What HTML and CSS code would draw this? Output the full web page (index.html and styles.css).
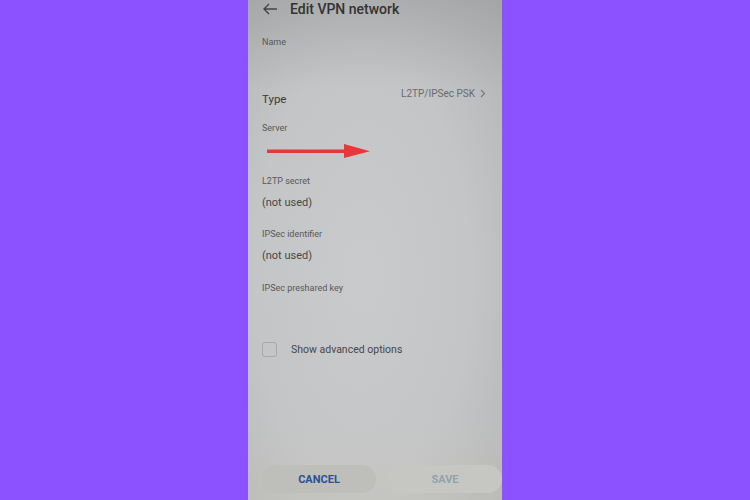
FILE: index.html
```html
<!DOCTYPE html>
<html lang="en">
<head>
    <meta charset="UTF-8">
    <title>Edit VPN network</title>
    <link rel="stylesheet" href="styles.css">
</head>
<body>

<div class="phone">
    <div class="header">
        <svg class="back" width="16" height="12" viewBox="0 0 16 12">
            <path d="M15 6H2M7 1L2 6l5 5" fill="none" stroke="#444" stroke-width="1.4"/>
        </svg>
        <span class="title">Edit VPN network</span>
    </div>

    <div class="label name-label">Name</div>

    <div class="type-row">
        <span class="type">Type</span>
        <span class="type-value">L2TP/IPSec PSK
            <svg width="6" height="9" viewBox="0 0 6 9"><path d="M1 1l3.5 3.5L1 8" fill="none" stroke="#777" stroke-width="1.1"/></svg>
        </span>
    </div>

    <div class="label server-label">Server</div>
    <svg class="arrow" width="110" height="16" viewBox="0 0 110 16">
        <path d="M5 6.5h80v3.5H5z" fill="#e8373a"/>
        <path d="M82 1l26 7.2-26 6.8z" fill="#e8373a"/>
    </svg>

    <div class="label secret-label">L2TP secret</div>
    <div class="value">(not used)</div>

    <div class="label ident-label">IPSec identifier</div>
    <div class="value">(not used)</div>

    <div class="label key-label">IPSec preshared key</div>

    <div class="check-row">
        <span class="checkbox"></span>
        <span class="check-text">Show advanced options</span>
    </div>

    <div class="buttons">
        <button class="btn cancel">CANCEL</button>
        <button class="btn save">SAVE</button>
    </div>
</div>

</body>
</html>
```

FILE: styles.css
```css
body {
    margin: 0;
    background-color: #8c52ff;
    font-family: Roboto, "Liberation Sans", sans-serif;
}
.phone {
    width: 254px;
    height: 500px;
    margin-left: 248px;
    box-sizing: border-box;
    padding-left: 14px;
    overflow: hidden;
    background:
        linear-gradient(to bottom, rgba(120, 120, 120, 0.25) 0%, rgba(120, 120, 120, 0) 18%, rgba(0, 0, 0, 0) 80%, rgba(200, 200, 185, 0.3) 100%),
        radial-gradient(ellipse at 45% 55%, #c9cacc 0%, #c4c5c7 55%, #b2b3b4 100%);
}
.header {
    height: 18px;
    display: flex;
    align-items: center;
}
.back {
    margin-right: 12px;
}
.title {
    font-size: 14px;
    font-weight: 500;
    color: #333;
}
.label {
    font-size: 9px;
    line-height: 14px;
    color: #585858;
}
.name-label {
    margin-top: 17px;
}
.type-row {
    margin-top: 37px;
    height: 20px;
    display: flex;
    justify-content: space-between;
    padding-right: 16px;
}
.type {
    font-size: 11.5px;
    color: #3a3a3a;
    padding-top: 6px;
}
.type-value {
    font-size: 10px;
    color: #6a6a6a;
    display: flex;
    align-items: center;
    gap: 5px;
    height: 14px;
}
.server-label {
    margin-top: 15px;
}
.arrow {
    display: block;
    margin-top: 8px;
}
.secret-label {
    margin-top: 15px;
}
.value {
    font-size: 11px;
    line-height: 16px;
    color: #474747;
    margin-top: 7px;
}
.ident-label {
    margin-top: 16px;
}
.key-label {
    margin-top: 17px;
}
.check-row {
    margin-top: 46px;
    height: 16px;
    display: flex;
    align-items: center;
}
.checkbox {
    width: 13px;
    height: 13px;
    border: 1.5px solid #a8a8a8;
    border-radius: 3px;
    margin-right: 14px;
}
.check-text {
    font-size: 10.5px;
    color: #474747;
}
.buttons {
    margin-top: 108px;
    display: flex;
    gap: 12px;
}
.btn {
    height: 28px;
    width: 114px;
    border: none;
    border-radius: 14px;
    font-family: Roboto, "Liberation Sans", sans-serif;
    font-size: 11px;
    font-weight: bold;
    padding: 0;
}
.cancel {
    background-color: #bebebb;
    color: #2d4f94;
}
.save {
    background-color: #c6c7c3;
    color: #92a3ae;
}
```
